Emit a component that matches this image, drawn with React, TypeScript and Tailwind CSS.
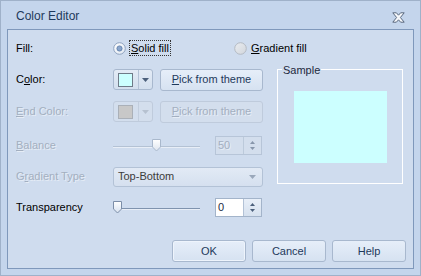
import React from 'react'

const disabledText = 'text-[#a3afc0] [text-shadow:1px_1px_0_#e6edf6]'

function Radio({ checked }: { checked: boolean }) {
    return (
        <svg width="13" height="13" viewBox="0 0 13 13" className="shrink-0">
            <defs>
                <linearGradient id={checked ? 'rg1' : 'rg2'} x1="0" y1="0" x2="1" y2="1">
                    <stop offset="0" stopColor={checked ? '#ffffff' : '#e9ecf0'} />
                    <stop offset="1" stopColor={checked ? '#dfe7f1' : '#d2d6dc'} />
                </linearGradient>
            </defs>
            <circle cx="6.5" cy="6.5" r="5.8" fill={`url(#${checked ? 'rg1' : 'rg2'})`} stroke={checked ? '#8ea2bf' : '#b4bac3'} />
            {checked && <circle cx="6.5" cy="6.5" r="2.6" fill="#8aa6cc" stroke="#5a7aa6" strokeWidth="0.8" />}
        </svg>
    )
}

function Arrow({ color = '#4c607c' }: { color?: string }) {
    return (
        <svg width="7" height="4" viewBox="0 0 7 4">
            <path d="M0 0 H7 L3.5 4 Z" fill={color} />
        </svg>
    )
}

function ColorButton({ color, disabled }: { color: string; disabled?: boolean }) {
    return (
        <div className={`flex h-[21px] w-[40px] items-center rounded-[3px] border ${disabled ? 'border-[#bfcbdc] bg-[#d3deed]' : 'border-[#a8b8ce] bg-gradient-to-b from-[#e3ebf6] to-[#d3dfee]'}`}>
            <div className={`ml-[4px] h-[14px] w-[15px] border ${disabled ? 'border-[#aab0b8]' : 'border-[#6f7a88]'}`} style={{ backgroundColor: color }} />
            <div className={`ml-[5px] h-full w-px ${disabled ? 'bg-[#c2cede]' : 'bg-[#b3c2d6]'}`} />
            <div className="flex flex-1 items-center justify-center">
                <Arrow color={disabled ? '#b6c1d0' : '#4c607c'} />
            </div>
        </div>
    )
}

function Button({ children, w, disabled, isDefault }: { children: React.ReactNode; w: string; disabled?: boolean; isDefault?: boolean }) {
    return (
        <div className={`${w} flex h-[22px] items-center justify-center rounded-[3px] border ${disabled ? `border-[#bfcbdc] bg-[#d3deed] ${disabledText}` : 'border-[#a8b8ce] bg-gradient-to-b from-[#e6eef9] to-[#d6e2f1] text-[#1e395b]'} ${isDefault ? 'shadow-[inset_0_0_0_1px_#eef4fc]' : ''}`}>
            {children}
        </div>
    )
}

function Slider({ pos, disabled }: { pos: number; disabled?: boolean }) {
    return (
        <div className="relative h-[14px] w-[87px]">
            <div className={`absolute left-0 right-0 top-[7px] h-px ${disabled ? 'bg-[#b4c2d4]' : 'bg-[#7f93ae]'}`} />
            <div className="absolute left-0 right-0 top-[8px] h-px bg-[#e8eef7]" />
            <svg width="9" height="13" viewBox="0 0 9 13" className="absolute top-0" style={{ left: pos }}>
                <defs>
                    <linearGradient id={disabled ? 'th1' : 'th2'} x1="0" y1="0" x2="0" y2="1">
                        <stop offset="0" stopColor="#ffffff" />
                        <stop offset="1" stopColor={disabled ? '#dde4ee' : '#d6e1ef'} />
                    </linearGradient>
                </defs>
                <path d="M0.5 0.5 H8.5 V8 L4.5 12 L0.5 8 Z" fill={`url(#${disabled ? 'th1' : 'th2'})`} stroke={disabled ? '#a9b8cc' : '#7c8ea8'} />
            </svg>
        </div>
    )
}

function Spin({ value, disabled }: { value: string; disabled?: boolean }) {
    return (
        <div className={`ml-[15px] flex h-[19px] w-[47px] border ${disabled ? 'border-[#b7c5d8] bg-[#d3deed]' : 'border-[#a3b4ca] bg-white'}`}>
            <div className={`flex flex-1 items-center pl-[2px] ${disabled ? disabledText : 'text-[#1c2b44]'}`}>{value}</div>
            <div className={`flex w-[18px] flex-col items-center justify-center gap-[3px] border-l ${disabled ? 'border-[#bccadb] bg-[#d3deed]' : 'border-[#b3c2d6] bg-gradient-to-b from-[#e8eff8] to-[#d6e1ef]'}`}>
                <svg width="5" height="3" viewBox="0 0 5 3"><path d="M0 3 L2.5 0 L5 3 Z" fill={disabled ? '#8796ab' : '#4c607c'} /></svg>
                <svg width="5" height="3" viewBox="0 0 5 3"><path d="M0 0 H5 L2.5 3 Z" fill={disabled ? '#8796ab' : '#4c607c'} /></svg>
            </div>
        </div>
    )
}

export default function App() {
    return (
        <div className="flex h-[276px] w-[421px] flex-col border border-[#9fb1c9] bg-[#c4d5ec] font-['Liberation_Sans',Arial,sans-serif] text-[11px] text-black">
            {/* Title bar */}
            <div className="flex h-[28px] shrink-0 items-center justify-between pl-[15px] pr-[15px]">
                <span className="pt-[2px] text-[12px] text-[#1e395b]">Color Editor</span>
                <svg width="13" height="11" viewBox="0 0 13 11" className="mt-[4px]">
                    <path d="M0.8 0.8 H4.4 L6.5 3.2 L8.6 0.8 H12.2 L8.4 5.5 L12.2 10.2 H8.6 L6.5 7.8 L4.4 10.2 H0.8 L4.6 5.5 Z" fill="#f6f8fb" stroke="#59687e" strokeWidth="1" strokeLinejoin="round" />
                </svg>
            </div>

            {/* Content panel */}
            <div className="mx-[6px] flex h-[240px] shrink-0 flex-col border border-[#7f98bb] bg-[#cfdcee] pl-[8px] pt-[10px]">
                {/* Fill */}
                <div className="flex h-[16px] items-center">
                    <span className="w-[97px]">Fill:</span>
                    <div className="flex w-[121px] items-center">
                        <Radio checked />
                        <span className="ml-[3px] border border-dotted border-[#333] px-[1px] leading-[14px]"><u>S</u>olid fill</span>
                    </div>
                    <div className="flex items-center">
                        <Radio checked={false} />
                        <span className="ml-[4px]"><u>G</u>radient fill</span>
                    </div>
                </div>

                <div className="mt-[13px] flex">
                    <div className="flex w-[247px] flex-col">
                        {/* Color */}
                        <div className="flex h-[21px] items-center">
                            <span className="w-[97px]">C<u>o</u>lor:</span>
                            <ColorButton color="#ccffff" />
                            <div className="ml-[7px]">
                                <Button w="w-[103px]"><span><u>P</u>ick from theme</span></Button>
                            </div>
                        </div>
                        {/* End color */}
                        <div className="mt-[11px] flex h-[21px] items-center">
                            <span className={`w-[97px] ${disabledText}`}><u>E</u>nd Color:</span>
                            <ColorButton color="#c8c8c8" disabled />
                            <div className="ml-[7px]">
                                <Button w="w-[103px]" disabled><span><u>P</u>ick from theme</span></Button>
                            </div>
                        </div>
                        {/* Balance */}
                        <div className="mt-[13px] flex h-[21px] items-center">
                            <span className={`w-[97px] ${disabledText}`}><u>B</u>alance</span>
                            <Slider pos={39} disabled />
                            <Spin value="50" disabled />
                        </div>
                        {/* Gradient type */}
                        <div className="mt-[10px] flex h-[21px] items-center">
                            <span className={`w-[97px] ${disabledText}`}>G<u>r</u>adient Type</span>
                            <div className="flex h-[20px] w-[150px] items-center justify-between rounded-[3px] border border-[#b3c2d6] bg-gradient-to-b from-[#e2eaf5] to-[#d5e0ef] pl-[4px] pr-[6px]">
                                <span className="text-[#3c3c3c]">Top-Bottom</span>
                                <Arrow color="#9aa8bb" />
                            </div>
                        </div>
                        {/* Transparency */}
                        <div className="mt-[10px] flex h-[21px] items-center">
                            <span className="w-[97px]">Transparency</span>
                            <Slider pos={0} />
                            <Spin value="0" />
                        </div>
                    </div>

                    {/* Sample */}
                    <div className="relative ml-[14px] h-[115px] w-[126px] border border-white">
                        <span className="absolute left-[4px] top-[-8px] bg-[#cfdcee] px-[1px] text-[#1e2a3d]">Sample</span>
                        <div className="ml-[16px] mt-[21px] h-[72px] w-[93px] bg-[#ccffff]" />
                    </div>
                </div>

                {/* Buttons */}
                <div className="mt-[22px] flex justify-end gap-[6px] pr-[7px]">
                    <Button w="w-[74px]" isDefault>OK</Button>
                    <Button w="w-[74px]">Cancel</Button>
                    <Button w="w-[74px]">Help</Button>
                </div>
            </div>
        </div>
    )
}
